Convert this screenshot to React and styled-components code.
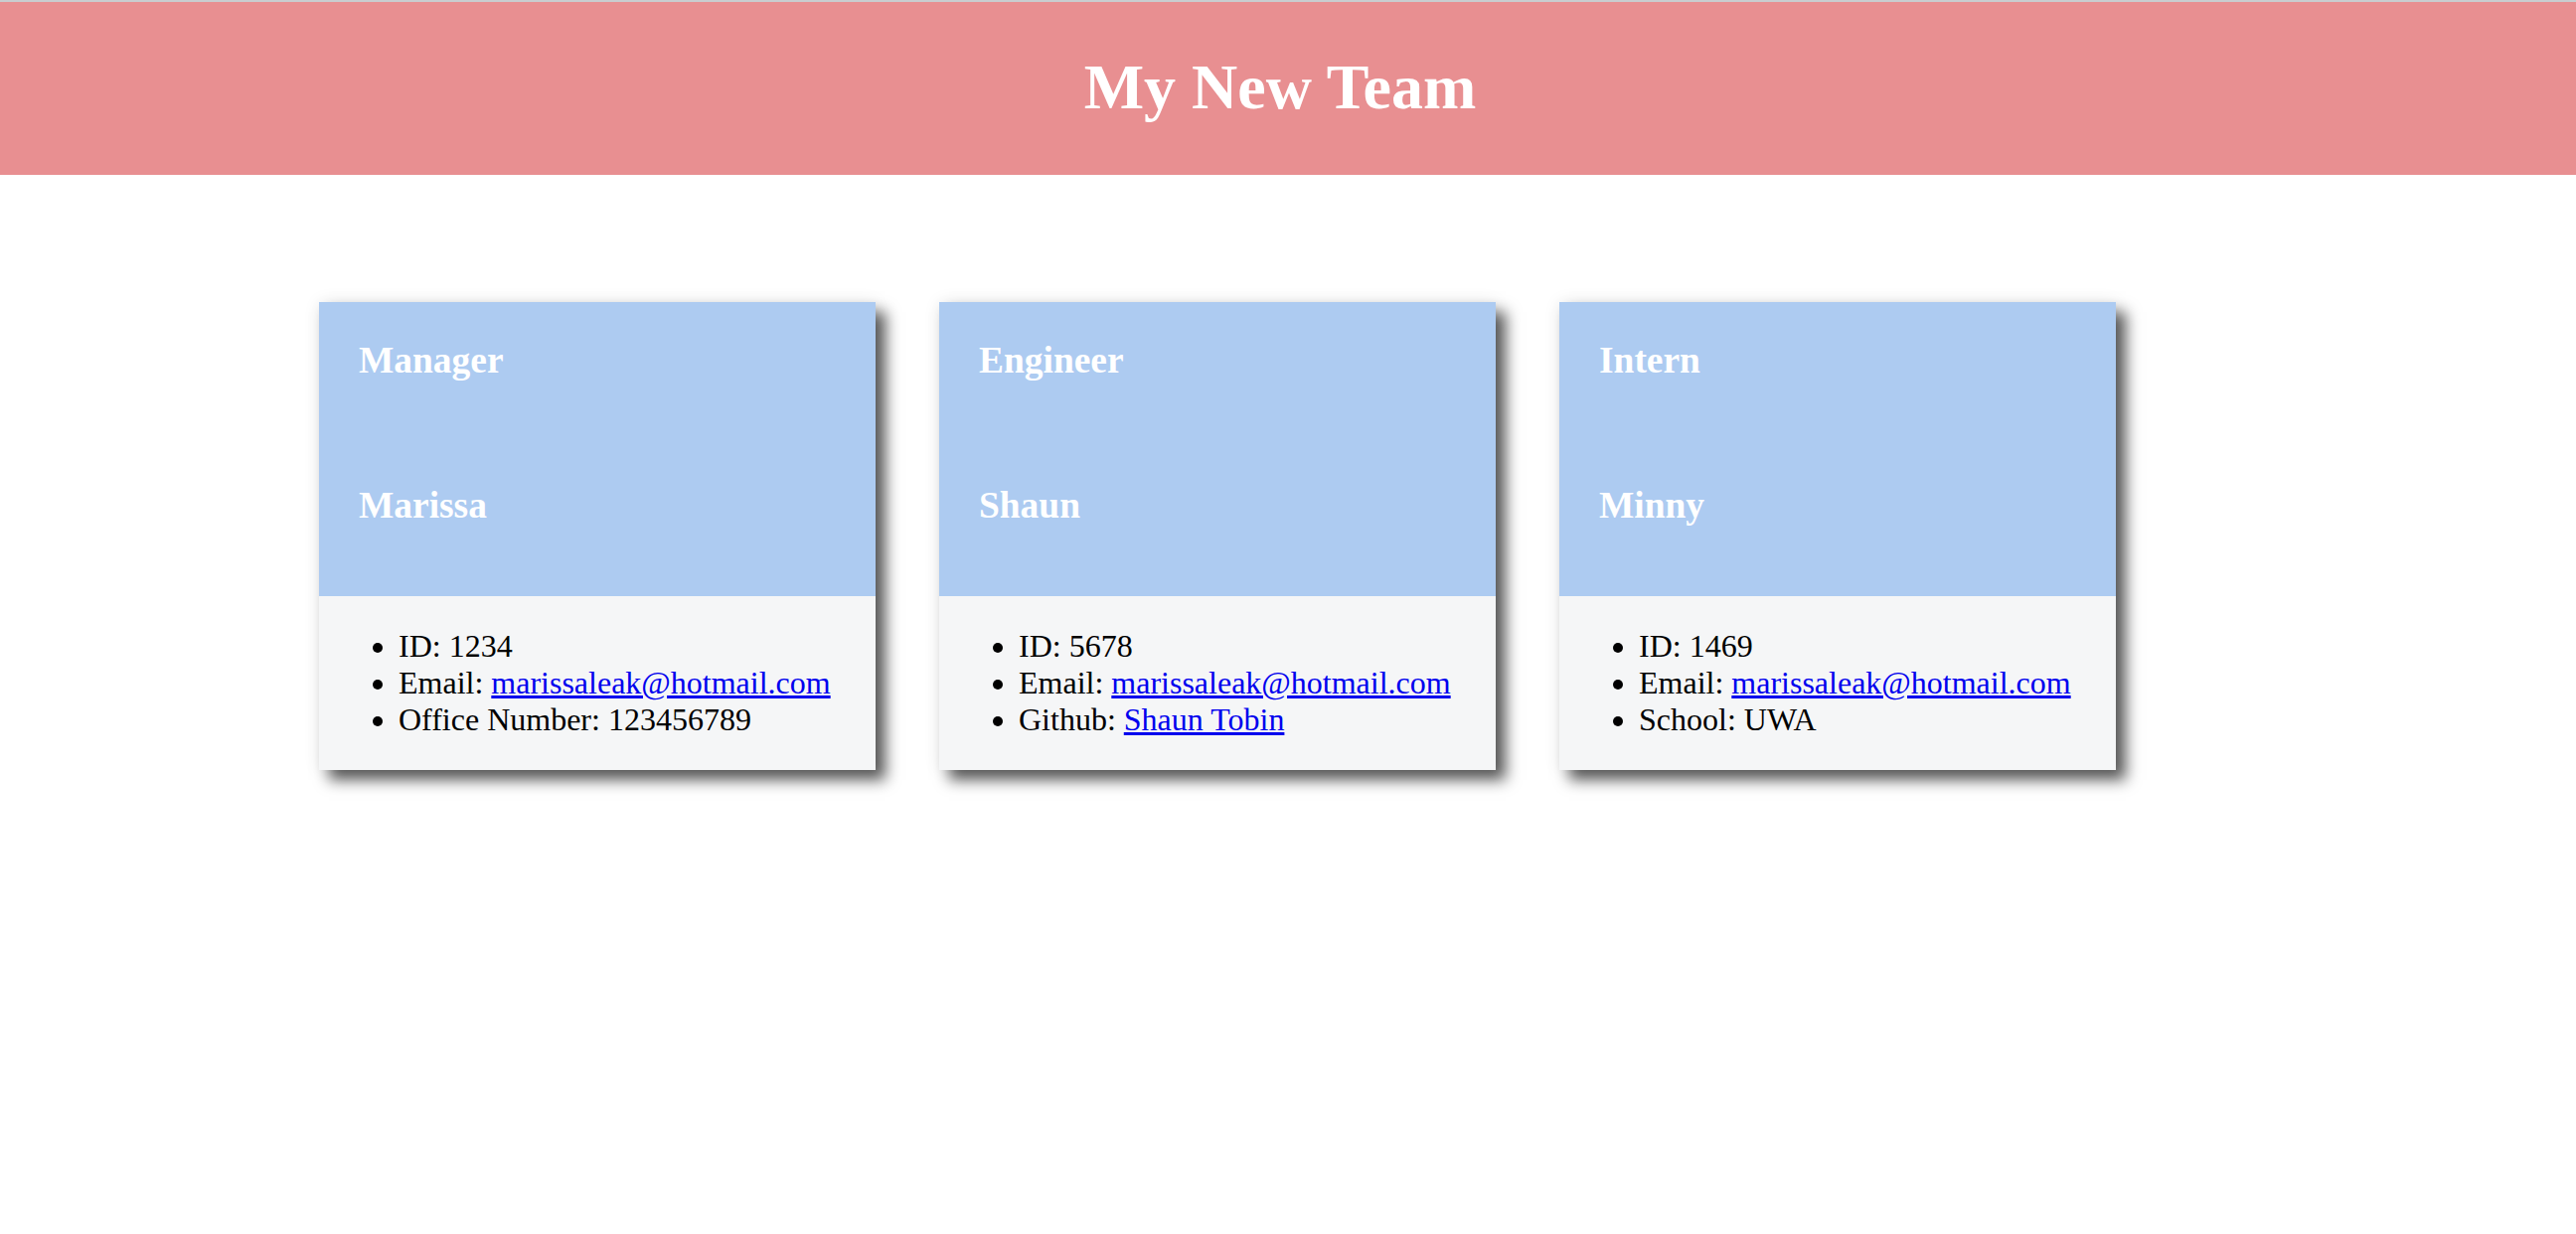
import styled, { createGlobalStyle } from "styled-components";

const GlobalStyle = createGlobalStyle`
  html, body {
    margin: 0;
    padding: 0;
    background: #ffffff;
    font-family: "Liberation Serif", "Times New Roman", serif;
  }
  body {
    min-height: 100vh;
  }
`;

const team = [
  {
    role: "Manager",
    name: "Marissa",
    id: "1234",
    email: "marissaleak@hotmail.com",
    extraLabel: "Office Number",
    extra: "123456789",
  },
  {
    role: "Engineer",
    name: "Shaun",
    id: "5678",
    email: "marissaleak@hotmail.com",
    extraLabel: "Github",
    extra: "Shaun Tobin",
    extraLink: "#",
  },
  {
    role: "Intern",
    name: "Minny",
    id: "1469",
    email: "marissaleak@hotmail.com",
    extraLabel: "School",
    extra: "UWA",
  },
];

export default function App() {
  return (
    <>
      <GlobalStyle />
      <Header>
        <Title>My New Team</Title>
      </Header>
      <Container>
        {team.map((member) => (
          <Card key={member.role}>
            <CardHeader>
              <Role>{member.role}</Role>
              <Name>{member.name}</Name>
            </CardHeader>
            <CardBody>
              <InfoList>
                <li>ID: {member.id}</li>
                <li>
                  Email: <a href={`mailto:${member.email}`}>{member.email}</a>
                </li>
                <li>
                  {member.extraLabel}:{" "}
                  {member.extraLink ? (
                    <a href={member.extraLink}>{member.extra}</a>
                  ) : (
                    member.extra
                  )}
                </li>
              </InfoList>
            </CardBody>
          </Card>
        ))}
      </Container>
    </>
  );
}

const Header = styled.header`
  background: #e88f91;
  border-top: 2px solid #c9cdd0;
  height: 174px;
  display: flex;
  justify-content: center;
  padding-right: 16px;
`;

const Title = styled.h1`
  margin: 0;
  padding-top: 49px;
  font-size: 64px;
  line-height: 74px;
  font-weight: 700;
  color: #ffffff;
`;

const Container = styled.main`
  max-width: 1950px;
  margin: 128px auto 0;
  padding-bottom: 120px;
  display: flex;
  flex-wrap: wrap;
  align-items: flex-start;
  gap: 64px;
`;

const Card = styled.section`
  width: 560px;
  box-shadow: 10px 10px 14px rgba(0, 0, 0, 0.65), 0 0 16px rgba(0, 0, 0, 0.08);
`;

const CardHeader = styled.div`
  background: #adcbf1;
  height: 296px;
  box-sizing: border-box;
  padding: 37px 40px 0;
`;

const Role = styled.h3`
  margin: 0;
  font-size: 37.44px;
  line-height: 43px;
  font-weight: 700;
  color: #ffffff;
`;

const Name = styled(Role)`
  margin-top: 103px;
`;

const CardBody = styled.div`
  background: #f5f6f7;
  height: 175px;
  box-sizing: border-box;
  padding: 32px 0;
`;

const InfoList = styled.ul`
  margin: 0;
  padding-left: 80px;
  font-size: 32px;
  line-height: 37px;
  color: #000000;

  a {
    color: #0000ee;
  }
`;
